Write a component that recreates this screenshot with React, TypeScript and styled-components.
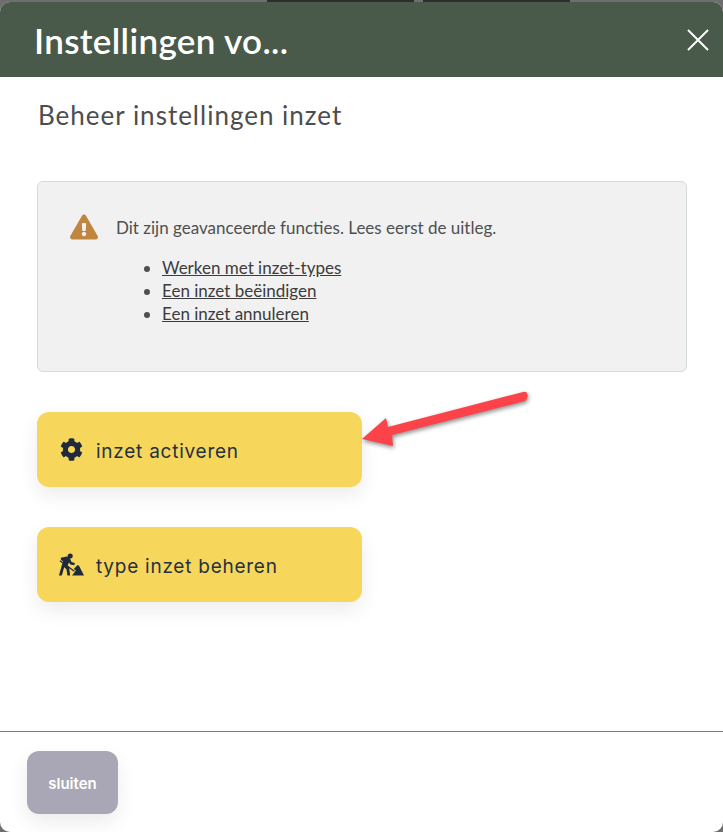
import styled, { createGlobalStyle } from "styled-components";
import { FaCog, FaExclamationTriangle } from "react-icons/fa";

const Global = createGlobalStyle`
  html, body {
    margin: 0;
    padding: 0;
    height: 100%;
    background: #6e6e6e;
  }
  #root {
    height: 100%;
  }
`;

const Backdrop = styled.div`
  position: relative;
  width: 723px;
  height: 832px;
  overflow: hidden;
  padding-top: 2px;
  box-sizing: border-box;
`;

const TopStrip = styled.div`
  position: absolute;
  top: 0;
  left: 267px;
  width: 147px;
  height: 2px;
  background: #2b2f2c;
  box-shadow: 156px 0 0 #2b2f2c;
`;

const Modal = styled.div`
  height: 830px;
  background: #fff;
  border-radius: 10px;
  display: flex;
  flex-direction: column;
  overflow: hidden;
`;

const Header = styled.header`
  flex: none;
  height: 75px;
  background: #49594a;
  display: flex;
  align-items: center;
  justify-content: space-between;
  padding: 0 12px 0 34px;
`;

const Title = styled.h1`
  margin: 0;
  font-family: "Lato", "Liberation Sans", sans-serif;
  font-size: 35px;
  font-weight: 600;
  letter-spacing: 0.35px;
  color: #fff;
`;

const CloseButton = styled.button`
  width: 26px;
  height: 26px;
  padding: 0;
  border: 0;
  background: none;
  display: flex;
`;

const Body = styled.main`
  flex: 1;
  padding: 22px 36px 0 37px;
`;

const Subtitle = styled.h2`
  margin: 0 0 50px 1px;
  font-family: "Lato", "Liberation Sans", sans-serif;
  font-size: 26px;
  line-height: 32px;
  font-weight: 400;
  letter-spacing: 1px;
  color: #4d4d4d;
`;

const Notice = styled.section`
  height: 191px;
  box-sizing: border-box;
  background: #f1f1f1;
  border: 1px solid #d3dad8;
  border-radius: 6px;
  padding: 32px 32px 0;
  font-family: "Lato", "Liberation Sans", sans-serif;
  font-size: 17px;
  color: #4f4f4f;
`;

const NoticeRow = styled.div`
  display: flex;
  align-items: center;
  gap: 18px;
  height: 26px;
  color: #c0853f;
`;

const NoticeText = styled.span`
  color: #4f4f4f;
`;

const LinkList = styled.ul`
  margin: 16px 0 0;
  padding: 0 0 0 92px;
  line-height: 23px;
`;

const DocLink = styled.a`
  color: #3c3c3c;
  text-decoration: underline;
`;

const ActionList = styled.div`
  display: flex;
  flex-direction: column;
  align-items: flex-start;
  gap: 40px;
  margin-top: 40px;
`;

const ActionButton = styled.button`
  width: 325px;
  height: 75px;
  display: flex;
  align-items: center;
  gap: 12px;
  padding: 3px 0 0 21px;
  border: 0;
  border-radius: 12px;
  background: #f6d75c;
  box-shadow: 0 8px 20px rgba(0, 0, 0, 0.08);
  color: #253041;
  font-family: "Inter", "Liberation Sans", sans-serif;
  font-size: 19px;
  letter-spacing: 0.75px;
`;

const IconSlot = styled.span`
  width: 26px;
  display: flex;
  justify-content: center;
  margin-top: -3px;
  color: #1f2a3c;
`;

const Footer = styled.footer`
  flex: none;
  height: 101px;
  box-sizing: border-box;
  border-top: 1px solid #7c7c7c;
  padding: 19px 0 0 27px;
`;

const CloseAction = styled.button`
  width: 91px;
  height: 63px;
  padding: 2px 0 0;
  border: 0;
  border-radius: 12px;
  background: #a9a7b5;
  box-shadow: 0 8px 20px rgba(0, 0, 0, 0.08);
  color: #fff;
  font-family: "Inter", "Liberation Sans", sans-serif;
  font-size: 15px;
  font-weight: 600;
`;

const Arrow = styled.svg`
  position: absolute;
  left: 355px;
  top: 385px;
  filter: drop-shadow(1px 2px 2px rgba(0, 0, 0, 0.45));
`;

const DiggingIcon = () => (
  <svg width="27" height="23" viewBox="0 0 27 23" fill="currentColor">
    <circle cx="12.7" cy="2.6" r="2.6" />
    <path d="M3 4.6 L9 3.2 Q11.5 3 12.5 5.2 L14 9 L17.5 10 L17 12.2 L12.8 11.4 L11.4 9.4 L10 12.4 L11.6 15 L12.6 23 L9.8 23 L8.8 16.4 L6.4 14.4 L4 23 L1 23 L4 12 L5.4 8.4 L3 6.6 Z" />
    <path d="M2 7.6 L17 18.6" stroke="currentColor" strokeWidth="1.3" />
    <path d="M14.6 23 L18.6 17.8 L16.4 16.2 L20 12.4 Q21.4 12 22 13 L27 23 Z" />
  </svg>
);

export default function App() {
  return (
    <>
      <Global />
      <Backdrop>
        <TopStrip />
        <Modal>
          <Header>
            <Title>Instellingen vo...</Title>
            <CloseButton aria-label="close">
              <svg width="26" height="26" viewBox="0 0 26 26">
                <path d="M3 3 L23 23 M23 3 L3 23" stroke="#fff" strokeWidth="2" fill="none" />
              </svg>
            </CloseButton>
          </Header>
          <Body>
            <Subtitle>Beheer instellingen inzet</Subtitle>
            <Notice>
              <NoticeRow>
                <FaExclamationTriangle size={28} />
                <NoticeText>Dit zijn geavanceerde functies. Lees eerst de uitleg.</NoticeText>
              </NoticeRow>
              <LinkList>
                <li><DocLink>Werken met inzet-types</DocLink></li>
                <li><DocLink>Een inzet beëindigen</DocLink></li>
                <li><DocLink>Een inzet annuleren</DocLink></li>
              </LinkList>
            </Notice>
            <ActionList>
              <ActionButton>
                <IconSlot><FaCog size={23} /></IconSlot>
                inzet activeren
              </ActionButton>
              <ActionButton>
                <IconSlot><DiggingIcon /></IconSlot>
                type inzet beheren
              </ActionButton>
            </ActionList>
          </Body>
          <Footer>
            <CloseAction>sluiten</CloseAction>
          </Footer>
        </Modal>
        <Arrow width="180" height="70" viewBox="0 0 180 70">
          <path
            d="M170 16 L37 50 L38 61 L7 54 L31 33 L33 42 L168 7 Q172 6 172.500 10 Q173 14 170 16 Z"
            fill="#fb4349"
          />
        </Arrow>
      </Backdrop>
    </>
  );
}
